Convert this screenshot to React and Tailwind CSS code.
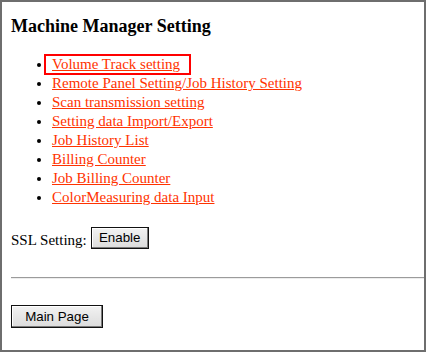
import React from 'react';

const links = [
  'Volume Track setting',
  'Remote Panel Setting/Job History Setting',
  'Scan transmission setting',
  'Setting data Import/Export',
  'Job History List',
  'Billing Counter',
  'Job Billing Counter',
  'ColorMeasuring data Input'
];

const btn =
  "flex items-center justify-center border border-[#111] bg-linear-to-b from-[#f2f2f2] to-[#dcdcdc] shadow-[inset_-1px_-1px_0_#7a7a7a,inset_1px_1px_0_#ffffff] font-['Liberation_Sans',Arial,sans-serif] text-[13.33px] text-black";

export default function App() {
  return (
    <div className="w-[426px] h-[352px] border-2 border-[#6e6e6e] bg-white text-black font-['Liberation_Serif','Times_New_Roman',serif]">
      <div className="pl-[9px]">
        <h3 className="pt-[13px] text-[18px] font-bold leading-[22px]">Machine Manager Setting</h3>

        {/* Menu links */}
        <ul className="mt-[18px] list-disc pl-[41px] text-[15px] leading-[19px]">
          {links.map((label, i) => (
            <li key={label}>
              {i === 0 ? (
                <span className="inline-block -ml-[8px] -my-px border-2 border-[#ff0000] pl-[6px] pr-[9px] leading-[17px]">
                  <a href="#" className="text-[#ff3300] underline">{label}</a>
                </span>
              ) : (
                <a href="#" className="text-[#ff3300] underline">{label}</a>
              )}
            </li>
          ))}
        </ul>

        {/* SSL row */}
        <div className="mt-[20px] flex items-start">
          <span className="mt-[4px] text-[15px] leading-[19px]">SSL Setting:</span>
          <button type="button" className={`ml-[4px] w-[58px] h-[22px] ${btn}`}>Enable</button>
        </div>

        <div className="mt-[27px] border-t border-t-[#9b9b9b] border-b border-b-[#ededed]" />

        <button type="button" className={`mt-[26px] w-[92px] h-[23px] ${btn}`}>Main Page</button>
      </div>
    </div>
  );
}
